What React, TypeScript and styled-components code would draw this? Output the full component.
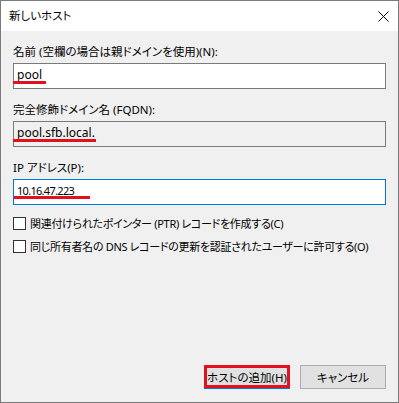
import React from "react";
import styled, { createGlobalStyle } from "styled-components";

const GlobalStyle = createGlobalStyle`
  body {
    margin: 0;
    background: #ffffff;
    font-family: "Noto Sans", "Noto Sans CJK JP", sans-serif;
  }
`;

const StyledWindow = styled.div`
  width: 399px;
  height: 403px;
  box-sizing: border-box;
  border: 1px solid #7a7a7a;
  display: flex;
  flex-direction: column;
  font-size: 12px;
  color: #000000;
  font-feature-settings: "palt";
`;

const StyledTitleBar = styled.div`
  height: 30px;
  flex-shrink: 0;
  background: #ffffff;
  display: flex;
  align-items: center;
  justify-content: space-between;
  padding: 0 9px 0 8px;
`;

const StyledTitle = styled.span`
  font-size: 11.5px;
  line-height: 16px;
`;

const StyledClient = styled.div`
  flex: 1;
  background: #f0f0f0;
  padding: 13px 12px 13px;
  display: flex;
  flex-direction: column;
`;

const StyledField = styled.div`
  display: flex;
  flex-direction: column;
  gap: 3px;
  margin-bottom: 13px;
`;

const StyledLabel = styled.label`
  font-size: 11.5px;
  line-height: 16px;
  white-space: nowrap;
`;

const StyledInput = styled.div<{ $focused?: boolean; $readOnly?: boolean; $tight?: boolean }>`
  position: relative;
  height: 26px;
  box-sizing: border-box;
  border: 1px solid ${(p) => (p.$focused ? "#0078d7" : "#7a7a7a")};
  background: ${(p) => (p.$readOnly ? "#f0f0f0" : "#ffffff")};
  display: flex;
  align-items: center;
  padding: 0 3px 3px;
  font-size: ${(p) => (p.$tight ? "11px" : "12px")};
  letter-spacing: ${(p) => (p.$tight ? "-0.7px" : "0")};
  line-height: 16px;
`;

const StyledMark = styled.span<{ $left: number; $width: number; $top: number }>`
  position: absolute;
  left: ${(p) => p.$left}px;
  width: ${(p) => p.$width}px;
  top: ${(p) => p.$top}px;
  height: 3px;
  background: #e3101e;
`;

const StyledChecks = styled.div`
  display: flex;
  flex-direction: column;
  gap: 10px;
  margin-top: -1px;
`;

const StyledCheckRow = styled.label`
  display: flex;
  align-items: center;
  gap: 4px;
  height: 13px;
  line-height: 16px;
  font-size: 11px;
  letter-spacing: -0.3px;
  white-space: nowrap;
`;

const StyledBox = styled.span`
  width: 13px;
  height: 13px;
  box-sizing: border-box;
  border: 1px solid #333333;
  background: #ffffff;
  flex-shrink: 0;
`;

const StyledButtons = styled.div`
  margin-top: auto;
  display: flex;
  justify-content: flex-end;
  gap: 10px;
`;

const StyledButton = styled.button<{ $default?: boolean }>`
  position: relative;
  width: 86px;
  height: 24px;
  box-sizing: border-box;
  padding: 0;
  background: #e1e1e1;
  border: 1px solid ${(p) => (p.$default ? "#0078d7" : "#adadad")};
  box-shadow: ${(p) => (p.$default ? "inset 0 0 0 1px #0078d7" : "none")};
  font-family: inherit;
  font-size: 11.5px;
  white-space: nowrap;
  color: #000000;
  font-feature-settings: "palt";
`;

const StyledHighlight = styled.span`
  position: absolute;
  inset: -1px -1px 0 -1px;
  border: 3px solid #e3101e;
  pointer-events: none;
`;

const CloseIcon = () => (
  <svg width="11" height="11" viewBox="0 0 11 11">
    <path d="M0.5 0.5 L10.5 10.5 M10.5 0.5 L0.5 10.5" stroke="#000" strokeWidth="1" />
  </svg>
);

const App = () => {
  return (
    <>
      <GlobalStyle />
      <StyledWindow>
        <StyledTitleBar>
          <StyledTitle>新しいホスト</StyledTitle>
          <CloseIcon />
        </StyledTitleBar>

        <StyledClient>
          <StyledField>
            <StyledLabel>名前 (空欄の場合は親ドメインを使用)(N):</StyledLabel>
            <StyledInput>
              pool
              <StyledMark $left={-1} $width={33} $top={17} />
            </StyledInput>
          </StyledField>

          <StyledField>
            <StyledLabel>完全修飾ドメイン名 (FQDN):</StyledLabel>
            <StyledInput $readOnly>
              pool.sfb.local.
              <StyledMark $left={-1} $width={83} $top={17} />
            </StyledInput>
          </StyledField>

          <StyledField>
            <StyledLabel>IP アドレス(P):</StyledLabel>
            <StyledInput $focused $tight>
              10.16.47.223
              <StyledMark $left={0} $width={76} $top={16} />
            </StyledInput>
          </StyledField>

          <StyledChecks>
            <StyledCheckRow>
              <StyledBox />
              関連付けられたポインター (PTR) レコードを作成する(C)
            </StyledCheckRow>
            <StyledCheckRow>
              <StyledBox />
              同じ所有者名の DNS レコードの更新を認証されたユーザーに許可する(O)
            </StyledCheckRow>
          </StyledChecks>

          <StyledButtons>
            <StyledButton $default>
              ホストの追加(H)
              <StyledHighlight />
            </StyledButton>
            <StyledButton>キャンセル</StyledButton>
          </StyledButtons>
        </StyledClient>
      </StyledWindow>
    </>
  );
};

export default App;
